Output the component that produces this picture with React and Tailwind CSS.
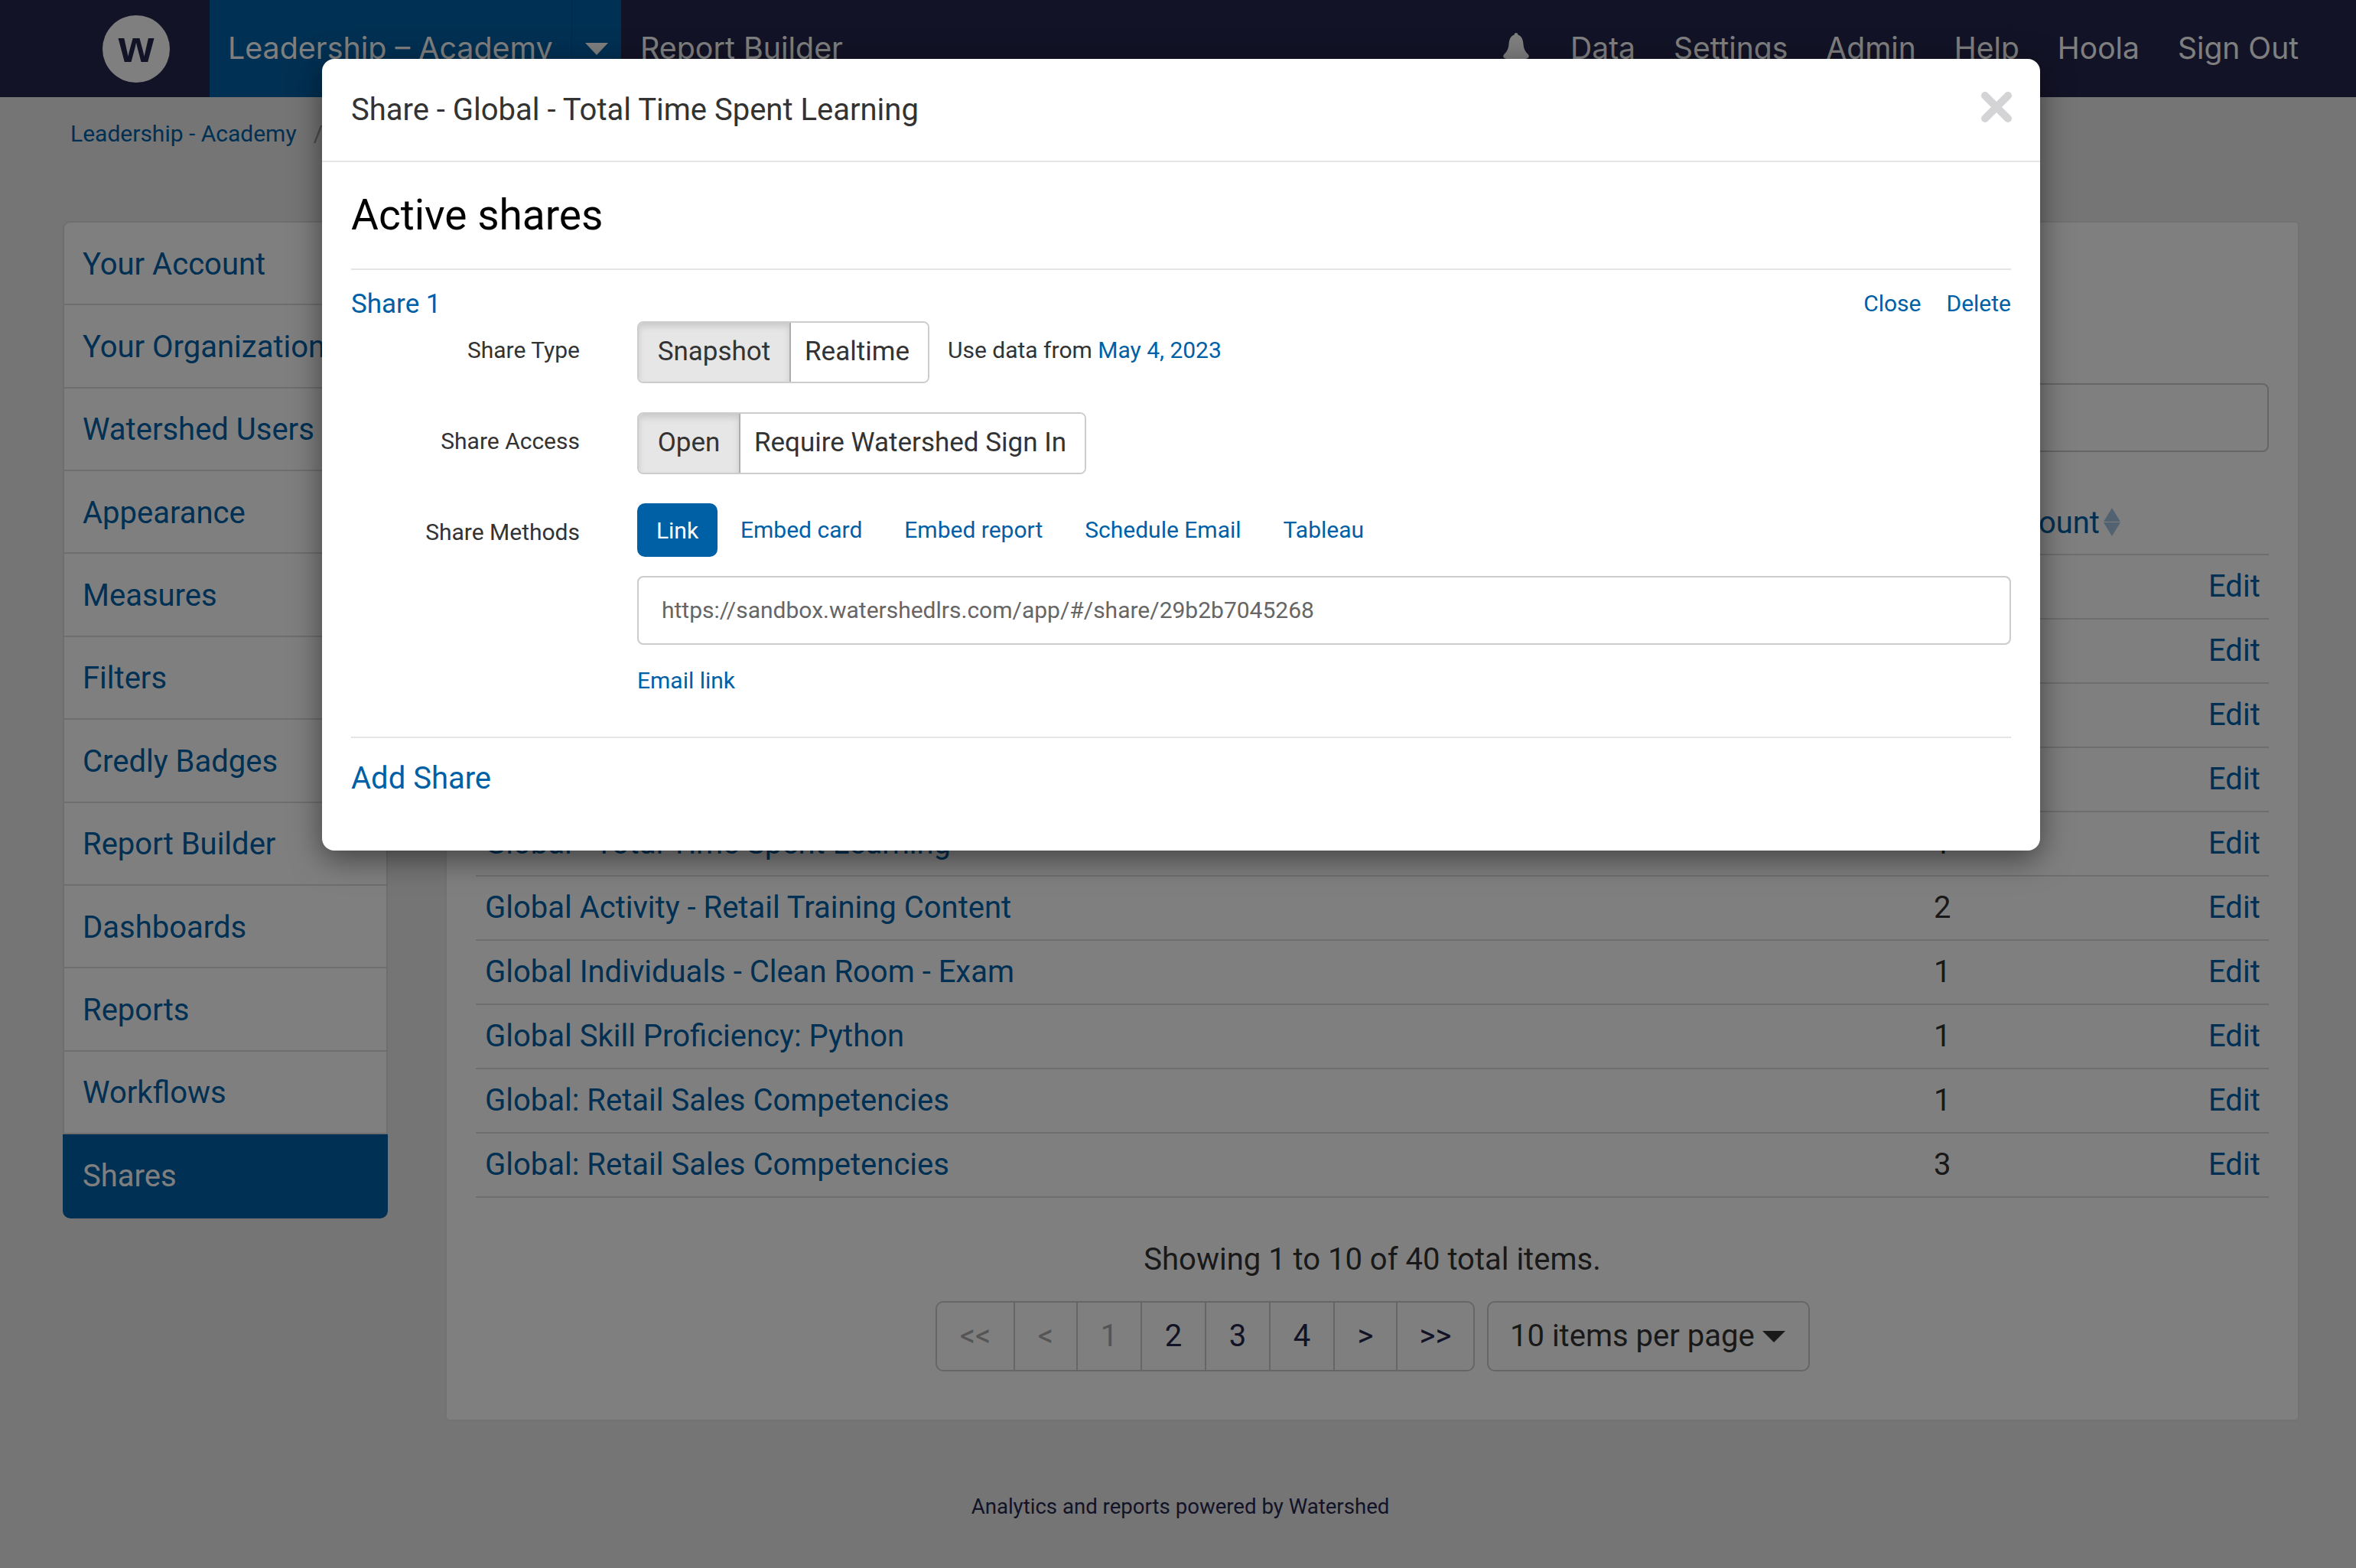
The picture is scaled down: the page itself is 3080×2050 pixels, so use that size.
import React from "react";

const roboto = "font-['Roboto',sans-serif]";
const side = ["Your Account","Your Organization","Watershed Users","Appearance","Measures","Filters","Credly Badges","Report Builder","Dashboards","Reports","Workflows"];
const rows = [
  ["", ""],["", ""],["", ""],["", ""],
  ["Global - Total Time Spent Learning", "1"],
  ["Global Activity - Retail Training Content", "2"],
  ["Global Individuals - Clean Room - Exam", "1"],
  ["Global Skill Proficiency: Python", "1"],
  ["Global: Retail Sales Competencies", "1"],
  ["Global: Retail Sales Competencies", "3"],
];
const pages = [["<<",100,true],["<",82,true],["1",84,true],["2",84],["3",84],["4",84],[">",82],[">>",101]];

function Header() {
  return (
    <header className="flex h-[127px] items-stretch bg-[#26264e] font-['Inter',sans-serif] text-[39.400px] text-white">
      <div className="flex w-[274px] items-center pl-[134px]">
        <div className="flex h-[88px] w-[88px] shrink-0 items-center justify-center rounded-full bg-white pb-[6px]">
          <span className="font-['Liberation_Sans',sans-serif] text-[60px] font-bold leading-none text-[#26264e]">w</span>
        </div>
      </div>
      <div className="flex bg-[#0060a6]">
        <div className="flex w-[473px] items-center pl-[24px]">Leadership – Academy</div>
        <div className="flex w-[65px] items-center justify-center border-l border-[#00558f]">
          <svg width="30" height="16" viewBox="0 0 30 16"><path d="M0 0h30L15 16z" fill="currentColor" /></svg>
        </div>
      </div>
      <div className="flex items-center pl-[25px]">Report Builder</div>
      <div className="ml-auto flex items-center gap-[50px] pr-[75px] text-[39px]">
        <svg width="36" height="36" viewBox="0 0 36 36" className="mb-[6px] mr-[3px]"><path d="M18 0c1.6 0 2.4 1 2.4 2.6 5 1.4 6.6 6 7.2 13 .5 6 3 9.6 6 12.4 2 2 1.4 4.6-1.4 5.4-4 1.2-8.400 2-14.200 2s-10.200-.8-14.200-2C1 32.600.4 30 2.400 28c3-2.800 5.500-6.400 6-12.400.6-7 2.200-11.600 7.200-13C15.600 1 16.400 0 18 0z" fill="currentColor" /></svg>
        <span>Data</span><span>Settings</span><span>Admin</span><span>Help</span><span>Hoola</span><span>Sign Out</span>
      </div>
    </header>
  );
}

function Sidebar() {
  return (
    <nav className="w-[425px] shrink-0 self-start text-[40px] text-[#0060a6]">
      <div className="rounded-t-[10px] border-x-2 border-t-2 border-[#dddddd] bg-white">
        {side.map((s) => (
          <div key={s} className="flex h-[108.360px] items-center whitespace-nowrap border-b-2 border-[#dddddd] pl-[24px] pt-[3px]">{s}</div>
        ))}
      </div>
      <div className="flex h-[110px] items-center rounded-b-[10px] bg-[#0060a6] pl-[26px] text-white">Shares</div>
    </nav>
  );
}

function Main() {
  return (
    <main className="flex w-[2424px] flex-col rounded-[6px] border-2 border-[#e4e4e4] bg-white px-[38px] pb-[63px] pt-[210px]">
      <div className="h-[90px] rounded-[8px] border-2 border-[#cccccc]" />
      <div className="relative mt-[49px] h-[86px] border-b-2 border-[#dddddd] text-[40px] text-[#0060a6]">
        <span className="absolute left-[1905px] top-[14px] whitespace-nowrap">Share Count</span>
        <svg className="absolute left-[2128px] top-[24px]" width="22" height="37" viewBox="0 0 22 37"><path d="M11 0l11 18H0zM11 37L0 19h22z" fill="#a4c4e2" /></svg>
      </div>
      <div className="text-[40px] text-[#0060a6]">
        {rows.map((r, i) => (
          <div key={i} className="flex h-[84px] items-center border-b-2 border-[#dddddd] pl-[12px]">
            <span className="w-[1894px] whitespace-nowrap">{r[0]}</span>
            <span className="w-[359px] text-[#333333]">{r[1]}</span>
            <span>Edit</span>
          </div>
        ))}
      </div>
      <p className="mt-[57px] text-center text-[40px] leading-[48px] text-[#333333]">Showing 1 to 10 of 40 total items.</p>
      <div className="mt-[30px] flex h-[92px] gap-[16px] pl-[601px] text-[40px]">
        <div className="flex rounded-[10px] border-2 border-[#cccccc]">
          {pages.map(([p, w, dis], i) => (
            <div key={i} style={{ width: w }} className={`flex items-center justify-center border-[#cccccc] ${i ? "border-l-2" : ""} ${dis ? "text-[#aaaaaa]" : "text-[#26264e]"}`}>{p}</div>
          ))}
        </div>
        <div className="flex w-[422px] items-center gap-[10px] rounded-[10px] border-2 border-[#cccccc] pl-[28px] text-[#333333]">
          10 items per page
          <svg width="30" height="15" viewBox="0 0 30 15"><path d="M0 0h30L15 15z" fill="currentColor" /></svg>
        </div>
      </div>
    </main>
  );
}

function Segment({ a, b, aw, bw }) {
  return (
    <div className="flex h-[81px] overflow-hidden rounded-[8px] border-2 border-[#cccccc] text-[35px] text-[#333333]">
      <div style={{ width: aw }} className="flex items-center justify-center border-r-2 border-[#adadad] bg-[#e6e6e6] shadow-[inset_0_5px_8px_rgba(0,0,0,0.125)]">{a}</div>
      <div style={{ width: bw }} className="flex items-center justify-center bg-white pr-[6px]">{b}</div>
    </div>
  );
}

function Row({ label, children, h }) {
  return (
    <div className="flex" style={{ minHeight: h }}>
      <div className="w-[299px] shrink-0 pt-[19px] text-right text-[30px] leading-[38px] text-[#333333]">{label}</div>
      <div className="ml-[75px] min-w-0 flex-1">{children}</div>
    </div>
  );
}

function Modal() {
  return (
    <div className={`absolute left-[421px] top-[77px] h-[1035px] w-[2246px] rounded-[16px] bg-white shadow-[0_10px_40px_rgba(0,0,0,0.5)] ${roboto}`}>
      <div className="relative flex h-[135px] items-center border-b-2 border-[#e5e5e5] pl-[38px] text-[40px] text-[#333333]">
        Share - Global - Total Time Spent Learning
        <svg className="absolute right-[37px] top-[43px]" width="40" height="40" viewBox="0 0 40 40"><path d="M5 5l30 30M35 5L5 35" stroke="#d4d4d6" strokeWidth="10" strokeLinecap="round" /></svg>
      </div>
      <div className="px-[38px]">
        <div className="flex h-[141px] items-center border-b-2 border-[#e5e5e5] text-[55px] text-black">Active shares</div>
        <div className="flex h-[67px] items-start justify-between pt-[23px] text-[#0060a6]">
          <span className="text-[35px] leading-[44px]">Share 1</span>
          <div className="flex gap-[33px] pt-[1px] text-[30px] leading-[40px]"><span>Close</span><span>Delete</span></div>
        </div>
        <Row label="Share Type" h={119}>
          <div className="flex items-start gap-[24px]">
            <Segment a="Snapshot" b="Realtime" aw={199} bw={179} />
            <span className="mt-[19px] text-[30px] leading-[38px] text-[#333333]">Use data from <span className="text-[#0060a6]">May 4, 2023</span></span>
          </div>
        </Row>
        <Row label="Share Access" h={119}>
          <div className="flex"><Segment a="Open" b="Require Watershed Sign In" aw={133} bw={450} /></div>
        </Row>
        <Row label="Share Methods" h={305}>
          <div className="flex h-[70px] items-center pb-[2px] text-[30px] text-[#0060a6]">
            <div className="mr-[30px] mt-[2px] flex h-[70px] w-[105px] items-center justify-center rounded-[10px] bg-[#0060a6] text-white">Link</div>
            <span>Embed card</span>
            <span className="ml-[55px]">Embed report</span>
            <span className="ml-[55px]">Schedule Email</span>
            <span className="ml-[55px]">Tableau</span>
          </div>
          <div className="mt-[25px] flex h-[90px] items-center rounded-[8px] border-2 border-[#cccccc] pb-[1px] pl-[30px] text-[30px] text-[#666666]">https://sandbox.watershedlrs.com/app/#/share/29b2b7045268</div>
          <div className="mt-[28px] text-[30px] leading-[38px] text-[#0060a6]">Email link</div>
        </Row>
        <div className="flex h-[106px] items-center border-t-2 border-[#e5e5e5] pt-[2px] text-[40px] text-[#0060a6]">Add Share</div>
      </div>
    </div>
  );
}

export default function App() {
  return (
    <div className={`relative h-[2050px] w-[3080px] overflow-hidden bg-[#eaeaea] ${roboto}`}>
      <Header />
      <div className="flex h-[162px] pl-[92px] pt-[28px] text-[30px] leading-[40px]">
        <span className="text-[#0060a6]">Leadership - Academy</span>
        <span className="ml-[22px] text-[#999999]">/</span>
      </div>
      <div className="flex items-start gap-[75px] pl-[82px]">
        <Sidebar />
        <Main />
      </div>
      <div className="mt-[94px] pl-[6px] text-center text-[27.600px] leading-[36px] text-[#26264e]">Analytics and reports powered by Watershed</div>
      <div className="absolute inset-0 bg-black/50" />
      <Modal />
    </div>
  );
}
